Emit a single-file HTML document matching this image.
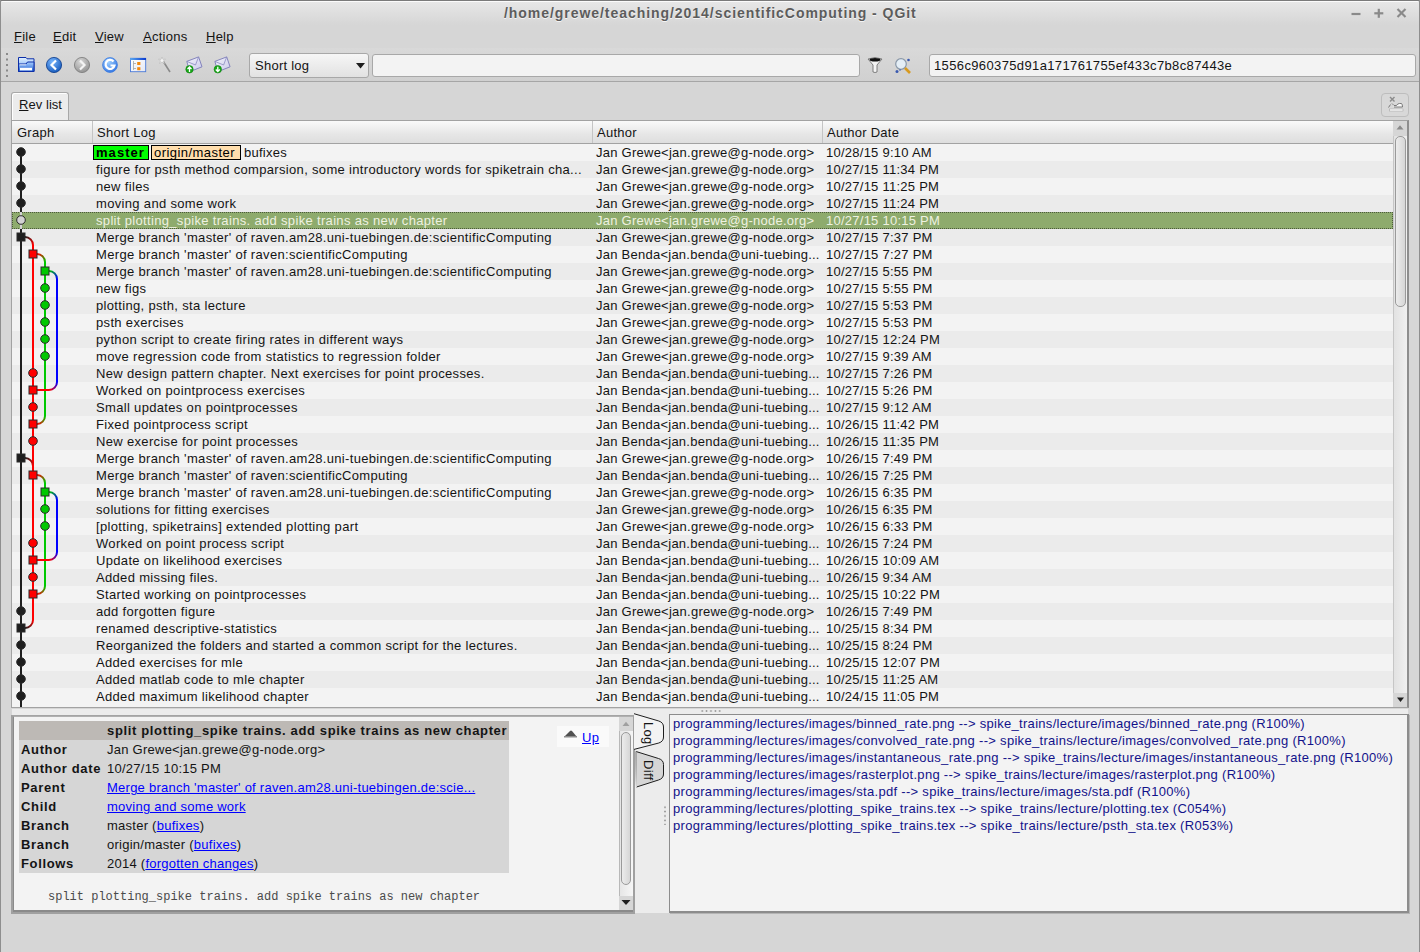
<!DOCTYPE html>
<html><head><meta charset="utf-8">
<style>
*{margin:0;padding:0;box-sizing:border-box}
html,body{width:1420px;height:952px;overflow:hidden;background:#d6d6d6;font-family:"Liberation Sans",sans-serif;font-size:13px;color:#141414}
.abs{position:absolute}
.t{white-space:pre;line-height:17px;font-size:13px;letter-spacing:0.25px;color:#141414}
.rowbg{left:12px;width:1381px;height:17px}
.sel{left:12px;width:1381px;height:17px;background:#8eab6d;border:1px dotted #4c5a3c}
.lbl{height:15px;border:1px solid #000;line-height:13px;padding-left:2px;white-space:pre;letter-spacing:0.25px;color:#000}
u{text-decoration:underline}
.hdr{top:121px;height:23px;background:linear-gradient(#fafafa,#e6e6e6 60%,#dedede);border-bottom:1px solid #a2a2a2}
.hsep{top:121px;width:1px;height:22px;background:#c4c4c4}
.frame{border:1px solid #9a9a9a}
.tb{top:92px}
.k{color:#1e1e1e}
a,.lnk{color:#0000ff;text-decoration:underline}
.ib{line-height:19px;white-space:pre;font-size:13px;letter-spacing:0.25px}
.b{font-weight:bold;letter-spacing:0.65px}
</style></head><body>
<!-- window frame & title -->
<div class="abs" style="left:0;top:0;width:1420px;height:26px;background:linear-gradient(#e8e8e8,#d8d8d8 85%,#d6d6d6);border-radius:5px 5px 0 0"></div>
<div class="abs" style="left:0;top:0;width:1420px;height:1px;background:#7a7a7a"></div>
<div class="abs" style="left:2px;top:1px;width:1416px;height:1px;background:#fbfbfb"></div>
<div class="abs" style="left:0;top:0;width:1px;height:952px;background:#8e8e8e"></div>
<div class="abs" style="left:1419px;top:0;width:1px;height:952px;background:#8e8e8e"></div>
<div class="abs" style="left:504px;top:5px;font-size:14px;font-weight:bold;letter-spacing:0.95px;line-height:17px;color:#5c5c5c;white-space:pre;text-shadow:0 1px 0 #f4f4f4">/home/grewe/teaching/2014/scientificComputing - QGit</div>
<svg class="abs" style="left:1345px;top:5px" width="70" height="18" viewBox="0 0 70 18">
 <g stroke="#8a8a8a" stroke-width="2.2" fill="none">
  <line x1="6.5" y1="9" x2="15.5" y2="9"/>
  <line x1="33.8" y1="3.8" x2="33.8" y2="12.8"/><line x1="29.3" y1="8.3" x2="38.3" y2="8.3"/>
  <line x1="52.5" y1="4" x2="60.5" y2="12"/><line x1="60.5" y1="4" x2="52.5" y2="12"/>
 </g>
</svg>
<!-- menu -->
<div class="abs t" style="left:14px;top:28px"><u>F</u>ile</div>
<div class="abs t" style="left:53px;top:28px"><u>E</u>dit</div>
<div class="abs t" style="left:95px;top:28px"><u>V</u>iew</div>
<div class="abs t" style="left:143px;top:28px"><u>A</u>ctions</div>
<div class="abs t" style="left:206px;top:28px"><u>H</u>elp</div>
<!-- toolbar -->
<div class="abs" style="left:1px;top:48px;width:1418px;height:33px;background:linear-gradient(#d9d9d9,#d0d0d0)"></div>
<div class="abs" style="left:1px;top:81px;width:1418px;height:1px;background:#a6a6a6"></div>
<svg class="abs" style="left:5px;top:52px" width="5" height="27"><g fill="#8a8a8a"><rect x="1" y="1" width="2" height="2"/><rect x="1" y="6.5" width="2" height="2"/><rect x="1" y="12" width="2" height="2"/><rect x="1" y="17.5" width="2" height="2"/><rect x="1" y="23" width="2" height="2"/></g></svg>

<svg class="abs" style="left:16px;top:55px" width="220" height="22" viewBox="0 0 220 22">
 <defs>
  <linearGradient id="fold" x1="0" y1="0" x2="0" y2="1"><stop offset="0" stop-color="#a8d0ff"/><stop offset="1" stop-color="#1c5ad0"/></linearGradient>
  <radialGradient id="blu" cx="0.4" cy="0.3" r="0.8"><stop offset="0" stop-color="#7ab8ff"/><stop offset="1" stop-color="#0b4fb3"/></radialGradient>
  <radialGradient id="gry" cx="0.4" cy="0.3" r="0.8"><stop offset="0" stop-color="#d8d8d8"/><stop offset="1" stop-color="#8a8a8a"/></radialGradient>
  <radialGradient id="blu2" cx="0.4" cy="0.3" r="0.8"><stop offset="0" stop-color="#9fd0ff"/><stop offset="1" stop-color="#2a6ee0"/></radialGradient>
 </defs>
 <!-- folder 18..34 -->
 <linearGradient id="fold2" x1="0" y1="0" x2="0" y2="1"><stop offset="0" stop-color="#e4f2ff"/><stop offset="1" stop-color="#5a9af0"/></linearGradient>
 <path d="M2.5 2.5 H10 L11 3.8 H18 V16.5 H2.5 Z" fill="url(#fold2)" stroke="#0c2ea8" stroke-width="1"/>
 <path d="M2.5 16.5 V9 H10 L11.5 7 H18 V16.5 Z" fill="url(#fold)" stroke="#0c2ea8" stroke-width="1"/>
 <line x1="3.5" y1="9.8" x2="10" y2="9.8" stroke="#ffffff" stroke-width="0.8"/>
 <rect x="4" y="12.8" width="12" height="2.6" fill="#ffffff"/>
 <!-- back 46..62 -->
 <circle cx="38" cy="10" r="7.6" fill="url(#blu)" stroke="#0a3a8a" stroke-width="0.8"/>
 <path d="M40 5.5 L35.5 10 L40 14.5" fill="none" stroke="#fff" stroke-width="2.2"/>
 <!-- forward 74..90 -->
 <circle cx="66" cy="10" r="7.6" fill="url(#gry)" stroke="#7a7a7a" stroke-width="0.8"/>
 <path d="M64 5.5 L68.5 10 L64 14.5" fill="none" stroke="#f4f4f4" stroke-width="2.2"/>
 <!-- refresh 103..118 -->
 <circle cx="94" cy="10" r="7.4" fill="url(#blu2)" stroke="#3a7ae0" stroke-width="0.8"/>
 <path d="M97.5 6.5 A4.5 4.5 0 1 0 98.5 10.5 H94.5" fill="none" stroke="#fff" stroke-width="2.2"/>
 <!-- tree window 130..146 -->
 <linearGradient id="win" x1="0" y1="0" x2="1" y2="1"><stop offset="0" stop-color="#ffffff"/><stop offset="1" stop-color="#e4e8f4"/></linearGradient>
 <linearGradient id="winh" x1="0" y1="0" x2="1" y2="0"><stop offset="0" stop-color="#5aa8f0"/><stop offset="1" stop-color="#0a3ad0"/></linearGradient>
 <rect x="114.5" y="3.3" width="15.2" height="13.4" fill="url(#win)" stroke="#4a7ad8" stroke-width="0.9"/>
 <rect x="114.2" y="3" width="15.8" height="2" fill="url(#winh)"/>
 <rect x="121.2" y="7" width="3.2" height="3" fill="#f48a10"/><rect x="121.2" y="12.2" width="3.2" height="3" fill="#f48a10"/>
 <path d="M117.5 6 V15 M117.5 8.5 H120 M117.5 13.5 H120" stroke="#999" stroke-width="0.7" fill="none"/>
 <!-- wand 162..172 -->
 <line x1="147" y1="6" x2="154" y2="17" stroke="#8a8a8a" stroke-width="1.6"/>
 <path d="M146 2 L147 4.5 L149.5 4 L147.5 6 L148.5 8.5 L146 7 L143.5 8.5 L144.5 6 L142.5 4 L145 4.5 Z" fill="#f4f4f4" stroke="#b0b0b0" stroke-width="0.5"/>
 <!-- mail up 186..201 -->
 <linearGradient id="env" x1="0" y1="0" x2="1" y2="1"><stop offset="0" stop-color="#f4f4fc"/><stop offset="1" stop-color="#c8c8e8"/></linearGradient>
 <path d="M170.8 6.4 L182.6 1.9 L186 11.8 L173.7 16.7 Z" fill="url(#env)" stroke="#7a7ab8" stroke-width="0.9"/>
 <path d="M170.8 6.4 L179.5 10 L182.6 1.9" fill="none" stroke="#8a8ac0" stroke-width="0.8"/>
 <circle cx="173.5" cy="14.3" r="3.7" fill="#18a818" stroke="#0a800a" stroke-width="0.6"/>
 <path d="M173.5 17 V12 M171.5 14 L173.5 12 L175.5 14" stroke="#fff" stroke-width="1.3" fill="none"/>
 <!-- mail down 214..229 -->
 <path d="M198.9 6.4 L210.7 1.9 L214.1 11.8 L201.8 16.7 Z" fill="url(#env)" stroke="#7a7ab8" stroke-width="0.9"/>
 <path d="M198.9 6.4 L207.6 10 L210.7 1.9" fill="none" stroke="#8a8ac0" stroke-width="0.8"/>
 <circle cx="201.8" cy="14.3" r="3.7" fill="#18a818" stroke="#0a800a" stroke-width="0.6"/>
 <path d="M201.8 11.8 V16.5 M199.8 14.5 L201.8 16.5 L203.8 14.5" stroke="#fff" stroke-width="1.3" fill="none"/>
</svg>
<svg class="abs" style="left:866px;top:56px" width="48" height="20" viewBox="0 0 48 20">
 <path d="M2 3 Q9 0 16 3 L11 9 V16 Q9 17 7 16 V9 Z" fill="#f4f4f4" stroke="#666" stroke-width="0.8"/>
 <ellipse cx="9" cy="3.8" rx="5.5" ry="1.8" fill="#111"/>
 <circle cx="35" cy="8" r="5.3" fill="#e4eef6" stroke="#8a98a8" stroke-width="1.2"/>
 <line x1="39" y1="12" x2="44" y2="17" stroke="#d89a20" stroke-width="2.6"/>
 <circle cx="42.5" cy="4" r="1.3" fill="#3a5ab0"/><circle cx="31" cy="15.5" r="1.5" fill="#3a5ab0"/><circle cx="34" cy="14" r="0.8" fill="#3a5ab0"/>
</svg>

<!-- combobox -->
<div class="abs" style="left:249px;top:53px;width:120px;height:25px;border:1px solid #a8a8a8;border-radius:3px;background:linear-gradient(#f6f6f6,#e2e2e2)"></div>
<div class="abs t" style="left:255px;top:57px">Short log</div>
<svg class="abs" style="left:355px;top:63px" width="12" height="6"><path d="M1 0 H10 L5.5 5.5 Z" fill="#1e1e1e"/></svg>
<div class="abs" style="left:372px;top:54px;width:488px;height:23px;border:1px solid #a8a8a8;border-radius:3px;background:#f3f3f3"></div>
<div class="abs" style="left:929px;top:54px;width:487px;height:23px;border:1px solid #a8a8a8;border-radius:3px;background:#f3f3f3"></div>
<div class="abs t" style="left:934px;top:57px;letter-spacing:0.37px">1556c960375d91a171761755ef433c7b8c87443e</div>
<!-- tab bar -->
<div class="abs" style="left:11px;top:92px;width:58px;height:29px;background:#ececec;border:1px solid #a8a8a8;border-bottom:none;border-radius:3px 3px 0 0;box-shadow:inset 1px 1px 0 #fff"></div>
<div class="abs t" style="left:19px;top:96px;letter-spacing:0.05px"><u>R</u>ev list</div>
<div class="abs" style="left:1381px;top:93px;width:28px;height:24px;border:1px solid #bdbdbd;border-radius:4px;background:#d8d8d8"></div>
<svg class="abs" style="left:1383px;top:95px" width="24" height="20" viewBox="0 0 24 20">
 <g stroke="#8c8c8c" stroke-width="1.4" fill="none"><line x1="7" y1="2" x2="11.5" y2="6.5"/><line x1="11.5" y1="2" x2="7" y2="6.5"/></g>
 <path d="M5.5 12.5 L7.5 9.5 M9 8.5 L11 10.5 H13.5 Q14.5 8.5 16.5 8.5 H18.5 Q19.5 9.5 19.5 12 H11" fill="#f8f8f8" stroke="#6e6e6e" stroke-width="0.9"/>
 <rect x="6.5" y="14" width="13.5" height="2" fill="#fafafa" stroke="#a0a0a0" stroke-width="0.5"/>
</svg>
<!-- list frame -->
<div class="abs" style="left:11px;top:120px;width:1398px;height:588px;background:#f3f3f3;border:1px solid #a2a2a2;border-right:2px solid #8e8e8e"></div>
<div class="abs rowbg" style="top:144px;background:#f3f3f3"></div><div class="abs lbl" style="left:93px;top:145px;width:56px;background:#00ff00;font-weight:bold;letter-spacing:1.05px">master</div><div class="abs lbl" style="left:151px;top:145px;width:90px;background:#ffdead;letter-spacing:0.45px">origin/master</div><div class="abs t" style="left:244px;top:144px">bufixes</div><div class="abs t" style="left:596px;top:144px;">Jan Grewe&lt;jan.grewe@g-node.org&gt;</div><div class="abs t" style="left:826px;top:144px;">10/28/15 9:10 AM</div><div class="abs rowbg" style="top:161px;background:#ebebeb"></div><div class="abs t" style="left:96px;top:161px;letter-spacing:0.33px;">figure for psth method comparsion, some introductory words for spiketrain cha...</div><div class="abs t" style="left:596px;top:161px;">Jan Grewe&lt;jan.grewe@g-node.org&gt;</div><div class="abs t" style="left:826px;top:161px;">10/27/15 11:34 PM</div><div class="abs rowbg" style="top:178px;background:#f3f3f3"></div><div class="abs t" style="left:96px;top:178px;letter-spacing:0.33px;">new files</div><div class="abs t" style="left:596px;top:178px;">Jan Grewe&lt;jan.grewe@g-node.org&gt;</div><div class="abs t" style="left:826px;top:178px;">10/27/15 11:25 PM</div><div class="abs rowbg" style="top:195px;background:#ebebeb"></div><div class="abs t" style="left:96px;top:195px;letter-spacing:0.33px;">moving and some work</div><div class="abs t" style="left:596px;top:195px;">Jan Grewe&lt;jan.grewe@g-node.org&gt;</div><div class="abs t" style="left:826px;top:195px;">10/27/15 11:24 PM</div><div class="abs sel" style="top:212px"></div><div class="abs t" style="left:96px;top:212px;letter-spacing:0.33px;color:#eef2e0;">split plotting_spike trains. add spike trains as new chapter</div><div class="abs t" style="left:596px;top:212px;color:#eef2e0;">Jan Grewe&lt;jan.grewe@g-node.org&gt;</div><div class="abs t" style="left:826px;top:212px;color:#eef2e0;">10/27/15 10:15 PM</div><div class="abs rowbg" style="top:229px;background:#ebebeb"></div><div class="abs t" style="left:96px;top:229px;letter-spacing:0.33px;">Merge branch 'master' of raven.am28.uni-tuebingen.de:scientificComputing</div><div class="abs t" style="left:596px;top:229px;">Jan Grewe&lt;jan.grewe@g-node.org&gt;</div><div class="abs t" style="left:826px;top:229px;">10/27/15 7:37 PM</div><div class="abs rowbg" style="top:246px;background:#f3f3f3"></div><div class="abs t" style="left:96px;top:246px;letter-spacing:0.33px;">Merge branch 'master' of raven:scientificComputing</div><div class="abs t" style="left:596px;top:246px;">Jan Benda&lt;jan.benda@uni-tuebing...</div><div class="abs t" style="left:826px;top:246px;">10/27/15 7:27 PM</div><div class="abs rowbg" style="top:263px;background:#ebebeb"></div><div class="abs t" style="left:96px;top:263px;letter-spacing:0.33px;">Merge branch 'master' of raven.am28.uni-tuebingen.de:scientificComputing</div><div class="abs t" style="left:596px;top:263px;">Jan Grewe&lt;jan.grewe@g-node.org&gt;</div><div class="abs t" style="left:826px;top:263px;">10/27/15 5:55 PM</div><div class="abs rowbg" style="top:280px;background:#f3f3f3"></div><div class="abs t" style="left:96px;top:280px;letter-spacing:0.33px;">new figs</div><div class="abs t" style="left:596px;top:280px;">Jan Grewe&lt;jan.grewe@g-node.org&gt;</div><div class="abs t" style="left:826px;top:280px;">10/27/15 5:55 PM</div><div class="abs rowbg" style="top:297px;background:#ebebeb"></div><div class="abs t" style="left:96px;top:297px;letter-spacing:0.33px;">plotting, psth, sta lecture</div><div class="abs t" style="left:596px;top:297px;">Jan Grewe&lt;jan.grewe@g-node.org&gt;</div><div class="abs t" style="left:826px;top:297px;">10/27/15 5:53 PM</div><div class="abs rowbg" style="top:314px;background:#f3f3f3"></div><div class="abs t" style="left:96px;top:314px;letter-spacing:0.33px;">psth exercises</div><div class="abs t" style="left:596px;top:314px;">Jan Grewe&lt;jan.grewe@g-node.org&gt;</div><div class="abs t" style="left:826px;top:314px;">10/27/15 5:53 PM</div><div class="abs rowbg" style="top:331px;background:#ebebeb"></div><div class="abs t" style="left:96px;top:331px;letter-spacing:0.33px;">python script to create firing rates in different ways</div><div class="abs t" style="left:596px;top:331px;">Jan Grewe&lt;jan.grewe@g-node.org&gt;</div><div class="abs t" style="left:826px;top:331px;">10/27/15 12:24 PM</div><div class="abs rowbg" style="top:348px;background:#f3f3f3"></div><div class="abs t" style="left:96px;top:348px;letter-spacing:0.33px;">move regression code from statistics to regression folder</div><div class="abs t" style="left:596px;top:348px;">Jan Grewe&lt;jan.grewe@g-node.org&gt;</div><div class="abs t" style="left:826px;top:348px;">10/27/15 9:39 AM</div><div class="abs rowbg" style="top:365px;background:#ebebeb"></div><div class="abs t" style="left:96px;top:365px;letter-spacing:0.33px;">New design pattern chapter. Next exercises for point processes.</div><div class="abs t" style="left:596px;top:365px;">Jan Benda&lt;jan.benda@uni-tuebing...</div><div class="abs t" style="left:826px;top:365px;">10/27/15 7:26 PM</div><div class="abs rowbg" style="top:382px;background:#f3f3f3"></div><div class="abs t" style="left:96px;top:382px;letter-spacing:0.33px;">Worked on pointprocess exercises</div><div class="abs t" style="left:596px;top:382px;">Jan Benda&lt;jan.benda@uni-tuebing...</div><div class="abs t" style="left:826px;top:382px;">10/27/15 5:26 PM</div><div class="abs rowbg" style="top:399px;background:#ebebeb"></div><div class="abs t" style="left:96px;top:399px;letter-spacing:0.33px;">Small updates on pointprocesses</div><div class="abs t" style="left:596px;top:399px;">Jan Benda&lt;jan.benda@uni-tuebing...</div><div class="abs t" style="left:826px;top:399px;">10/27/15 9:12 AM</div><div class="abs rowbg" style="top:416px;background:#f3f3f3"></div><div class="abs t" style="left:96px;top:416px;letter-spacing:0.33px;">Fixed pointprocess script</div><div class="abs t" style="left:596px;top:416px;">Jan Benda&lt;jan.benda@uni-tuebing...</div><div class="abs t" style="left:826px;top:416px;">10/26/15 11:42 PM</div><div class="abs rowbg" style="top:433px;background:#ebebeb"></div><div class="abs t" style="left:96px;top:433px;letter-spacing:0.33px;">New exercise for point processes</div><div class="abs t" style="left:596px;top:433px;">Jan Benda&lt;jan.benda@uni-tuebing...</div><div class="abs t" style="left:826px;top:433px;">10/26/15 11:35 PM</div><div class="abs rowbg" style="top:450px;background:#f3f3f3"></div><div class="abs t" style="left:96px;top:450px;letter-spacing:0.33px;">Merge branch 'master' of raven.am28.uni-tuebingen.de:scientificComputing</div><div class="abs t" style="left:596px;top:450px;">Jan Grewe&lt;jan.grewe@g-node.org&gt;</div><div class="abs t" style="left:826px;top:450px;">10/26/15 7:49 PM</div><div class="abs rowbg" style="top:467px;background:#ebebeb"></div><div class="abs t" style="left:96px;top:467px;letter-spacing:0.33px;">Merge branch 'master' of raven:scientificComputing</div><div class="abs t" style="left:596px;top:467px;">Jan Benda&lt;jan.benda@uni-tuebing...</div><div class="abs t" style="left:826px;top:467px;">10/26/15 7:25 PM</div><div class="abs rowbg" style="top:484px;background:#f3f3f3"></div><div class="abs t" style="left:96px;top:484px;letter-spacing:0.33px;">Merge branch 'master' of raven.am28.uni-tuebingen.de:scientificComputing</div><div class="abs t" style="left:596px;top:484px;">Jan Grewe&lt;jan.grewe@g-node.org&gt;</div><div class="abs t" style="left:826px;top:484px;">10/26/15 6:35 PM</div><div class="abs rowbg" style="top:501px;background:#ebebeb"></div><div class="abs t" style="left:96px;top:501px;letter-spacing:0.33px;">solutions for fitting exercises</div><div class="abs t" style="left:596px;top:501px;">Jan Grewe&lt;jan.grewe@g-node.org&gt;</div><div class="abs t" style="left:826px;top:501px;">10/26/15 6:35 PM</div><div class="abs rowbg" style="top:518px;background:#f3f3f3"></div><div class="abs t" style="left:96px;top:518px;letter-spacing:0.33px;">[plotting, spiketrains] extended plotting part</div><div class="abs t" style="left:596px;top:518px;">Jan Grewe&lt;jan.grewe@g-node.org&gt;</div><div class="abs t" style="left:826px;top:518px;">10/26/15 6:33 PM</div><div class="abs rowbg" style="top:535px;background:#ebebeb"></div><div class="abs t" style="left:96px;top:535px;letter-spacing:0.33px;">Worked on point process script</div><div class="abs t" style="left:596px;top:535px;">Jan Benda&lt;jan.benda@uni-tuebing...</div><div class="abs t" style="left:826px;top:535px;">10/26/15 7:24 PM</div><div class="abs rowbg" style="top:552px;background:#f3f3f3"></div><div class="abs t" style="left:96px;top:552px;letter-spacing:0.33px;">Update on likelihood exercises</div><div class="abs t" style="left:596px;top:552px;">Jan Benda&lt;jan.benda@uni-tuebing...</div><div class="abs t" style="left:826px;top:552px;">10/26/15 10:09 AM</div><div class="abs rowbg" style="top:569px;background:#ebebeb"></div><div class="abs t" style="left:96px;top:569px;letter-spacing:0.33px;">Added missing files.</div><div class="abs t" style="left:596px;top:569px;">Jan Benda&lt;jan.benda@uni-tuebing...</div><div class="abs t" style="left:826px;top:569px;">10/26/15 9:34 AM</div><div class="abs rowbg" style="top:586px;background:#f3f3f3"></div><div class="abs t" style="left:96px;top:586px;letter-spacing:0.33px;">Started working on pointprocesses</div><div class="abs t" style="left:596px;top:586px;">Jan Benda&lt;jan.benda@uni-tuebing...</div><div class="abs t" style="left:826px;top:586px;">10/25/15 10:22 PM</div><div class="abs rowbg" style="top:603px;background:#ebebeb"></div><div class="abs t" style="left:96px;top:603px;letter-spacing:0.33px;">add forgotten figure</div><div class="abs t" style="left:596px;top:603px;">Jan Grewe&lt;jan.grewe@g-node.org&gt;</div><div class="abs t" style="left:826px;top:603px;">10/26/15 7:49 PM</div><div class="abs rowbg" style="top:620px;background:#f3f3f3"></div><div class="abs t" style="left:96px;top:620px;letter-spacing:0.33px;">renamed descriptive-statistics</div><div class="abs t" style="left:596px;top:620px;">Jan Benda&lt;jan.benda@uni-tuebing...</div><div class="abs t" style="left:826px;top:620px;">10/25/15 8:34 PM</div><div class="abs rowbg" style="top:637px;background:#ebebeb"></div><div class="abs t" style="left:96px;top:637px;letter-spacing:0.33px;">Reorganized the folders and started a common script for the lectures.</div><div class="abs t" style="left:596px;top:637px;">Jan Benda&lt;jan.benda@uni-tuebing...</div><div class="abs t" style="left:826px;top:637px;">10/25/15 8:24 PM</div><div class="abs rowbg" style="top:654px;background:#f3f3f3"></div><div class="abs t" style="left:96px;top:654px;letter-spacing:0.33px;">Added exercises for mle</div><div class="abs t" style="left:596px;top:654px;">Jan Benda&lt;jan.benda@uni-tuebing...</div><div class="abs t" style="left:826px;top:654px;">10/25/15 12:07 PM</div><div class="abs rowbg" style="top:671px;background:#ebebeb"></div><div class="abs t" style="left:96px;top:671px;letter-spacing:0.33px;">Added matlab code to mle chapter</div><div class="abs t" style="left:596px;top:671px;">Jan Benda&lt;jan.benda@uni-tuebing...</div><div class="abs t" style="left:826px;top:671px;">10/25/15 11:25 AM</div><div class="abs rowbg" style="top:688px;background:#f3f3f3"></div><div class="abs t" style="left:96px;top:688px;letter-spacing:0.33px;">Added maximum likelihood chapter</div><div class="abs t" style="left:596px;top:688px;">Jan Benda&lt;jan.benda@uni-tuebing...</div><div class="abs t" style="left:826px;top:688px;">10/24/15 11:05 PM</div>
<div class="abs hdr" style="left:12px;width:1381px"></div>
<div class="abs hsep" style="left:92px"></div>
<div class="abs hsep" style="left:592px"></div>
<div class="abs hsep" style="left:822px"></div>
<div class="abs t" style="left:17px;top:124px">Graph</div>
<div class="abs t" style="left:97px;top:124px">Short Log</div>
<div class="abs t" style="left:597px;top:124px">Author</div>
<div class="abs t" style="left:827px;top:124px">Author Date</div>
<svg class="abs" style="left:0;top:0" width="100" height="710" viewBox="0 0 100 710"><defs><linearGradient id="g1" gradientUnits="userSpaceOnUse" x1="25" y1="237" x2="33" y2="245"><stop offset="0" stop-color="#1e1e1e"/><stop offset="1" stop-color="#ff0000"/></linearGradient><linearGradient id="g2" gradientUnits="userSpaceOnUse" x1="37" y1="254" x2="45" y2="262"><stop offset="0" stop-color="#ff0000"/><stop offset="1" stop-color="#00c800"/></linearGradient><linearGradient id="g3" gradientUnits="userSpaceOnUse" x1="49" y1="271" x2="57" y2="279"><stop offset="0" stop-color="#00c800"/><stop offset="1" stop-color="#0000ff"/></linearGradient><linearGradient id="g4" gradientUnits="userSpaceOnUse" x1="25" y1="458" x2="33" y2="466"><stop offset="0" stop-color="#1e1e1e"/><stop offset="1" stop-color="#ff0000"/></linearGradient><linearGradient id="g5" gradientUnits="userSpaceOnUse" x1="37" y1="475" x2="45" y2="483"><stop offset="0" stop-color="#ff0000"/><stop offset="1" stop-color="#00c800"/></linearGradient><linearGradient id="g6" gradientUnits="userSpaceOnUse" x1="49" y1="492" x2="57" y2="500"><stop offset="0" stop-color="#00c800"/><stop offset="1" stop-color="#0000ff"/></linearGradient><linearGradient id="g7" gradientUnits="userSpaceOnUse" x1="57" y1="382" x2="49" y2="390"><stop offset="0" stop-color="#0000ff"/><stop offset="1" stop-color="#ff0000"/></linearGradient><linearGradient id="g8" gradientUnits="userSpaceOnUse" x1="45" y1="416" x2="37" y2="424"><stop offset="0" stop-color="#00c800"/><stop offset="1" stop-color="#ff0000"/></linearGradient><linearGradient id="g9" gradientUnits="userSpaceOnUse" x1="57" y1="552" x2="49" y2="560"><stop offset="0" stop-color="#0000ff"/><stop offset="1" stop-color="#ff0000"/></linearGradient><linearGradient id="g10" gradientUnits="userSpaceOnUse" x1="45" y1="586" x2="37" y2="594"><stop offset="0" stop-color="#00c800"/><stop offset="1" stop-color="#ff0000"/></linearGradient><linearGradient id="g11" gradientUnits="userSpaceOnUse" x1="33" y1="620" x2="25" y2="628"><stop offset="0" stop-color="#ff0000"/><stop offset="1" stop-color="#1e1e1e"/></linearGradient></defs><line x1="21" y1="152" x2="21" y2="707" stroke="#1e1e1e" stroke-width="2"/><line x1="33" y1="245" x2="33" y2="620" stroke="#ff0000" stroke-width="2"/><line x1="45" y1="262" x2="45" y2="416" stroke="#00c800" stroke-width="2"/><line x1="45" y1="483" x2="45" y2="586" stroke="#00c800" stroke-width="2"/><line x1="57" y1="279" x2="57" y2="382" stroke="#0000ff" stroke-width="2"/><line x1="57" y1="500" x2="57" y2="552" stroke="#0000ff" stroke-width="2"/><line x1="21" y1="212" x2="21" y2="229" stroke="#d2d2d2" stroke-width="2"/><path d="M25 237 H25 A8 8 0 0 1 33 245" fill="none" stroke="url(#g1)" stroke-width="2"/><path d="M37 254 H37 A8 8 0 0 1 45 262" fill="none" stroke="url(#g2)" stroke-width="2"/><path d="M49 271 H49 A8 8 0 0 1 57 279" fill="none" stroke="url(#g3)" stroke-width="2"/><path d="M25 458 H25 A8 8 0 0 1 33 466" fill="none" stroke="url(#g4)" stroke-width="2"/><path d="M37 475 H37 A8 8 0 0 1 45 483" fill="none" stroke="url(#g5)" stroke-width="2"/><path d="M49 492 H49 A8 8 0 0 1 57 500" fill="none" stroke="url(#g6)" stroke-width="2"/><path d="M57 382 A8 8 0 0 1 49 390 H37" fill="none" stroke="url(#g7)" stroke-width="2"/><path d="M45 416 A8 8 0 0 1 37 424 H37" fill="none" stroke="url(#g8)" stroke-width="2"/><path d="M57 552 A8 8 0 0 1 49 560 H37" fill="none" stroke="url(#g9)" stroke-width="2"/><path d="M45 586 A8 8 0 0 1 37 594 H37" fill="none" stroke="url(#g10)" stroke-width="2"/><path d="M33 620 A8 8 0 0 1 25 628 H25" fill="none" stroke="url(#g11)" stroke-width="2"/><circle cx="21" cy="152" r="4.3" fill="#1e1e1e" stroke="#2a2a2a" stroke-width="1"/><circle cx="21" cy="169" r="4.3" fill="#1e1e1e" stroke="#2a2a2a" stroke-width="1"/><circle cx="21" cy="186" r="4.3" fill="#1e1e1e" stroke="#2a2a2a" stroke-width="1"/><circle cx="21" cy="203" r="4.3" fill="#1e1e1e" stroke="#2a2a2a" stroke-width="1"/><circle cx="21" cy="220" r="4.3" fill="#d2d2d2" stroke="#2a2a2a" stroke-width="1"/><rect x="17" y="233" width="8" height="8" fill="#1e1e1e" stroke="#2a2a2a" stroke-width="1"/><rect x="29" y="250" width="8" height="8" fill="#ff0000" stroke="#2a2a2a" stroke-width="1"/><rect x="41" y="267" width="8" height="8" fill="#00c800" stroke="#2a2a2a" stroke-width="1"/><circle cx="45" cy="288" r="4.3" fill="#00c800" stroke="#2a2a2a" stroke-width="1"/><circle cx="45" cy="305" r="4.3" fill="#00c800" stroke="#2a2a2a" stroke-width="1"/><circle cx="45" cy="322" r="4.3" fill="#00c800" stroke="#2a2a2a" stroke-width="1"/><circle cx="45" cy="339" r="4.3" fill="#00c800" stroke="#2a2a2a" stroke-width="1"/><circle cx="45" cy="356" r="4.3" fill="#00c800" stroke="#2a2a2a" stroke-width="1"/><circle cx="33" cy="373" r="4.3" fill="#ff0000" stroke="#2a2a2a" stroke-width="1"/><rect x="29" y="386" width="8" height="8" fill="#ff0000" stroke="#2a2a2a" stroke-width="1"/><circle cx="33" cy="407" r="4.3" fill="#ff0000" stroke="#2a2a2a" stroke-width="1"/><rect x="29" y="420" width="8" height="8" fill="#ff0000" stroke="#2a2a2a" stroke-width="1"/><circle cx="33" cy="441" r="4.3" fill="#ff0000" stroke="#2a2a2a" stroke-width="1"/><rect x="17" y="454" width="8" height="8" fill="#1e1e1e" stroke="#2a2a2a" stroke-width="1"/><rect x="29" y="471" width="8" height="8" fill="#ff0000" stroke="#2a2a2a" stroke-width="1"/><rect x="41" y="488" width="8" height="8" fill="#00c800" stroke="#2a2a2a" stroke-width="1"/><circle cx="45" cy="509" r="4.3" fill="#00c800" stroke="#2a2a2a" stroke-width="1"/><circle cx="45" cy="526" r="4.3" fill="#00c800" stroke="#2a2a2a" stroke-width="1"/><circle cx="33" cy="543" r="4.3" fill="#ff0000" stroke="#2a2a2a" stroke-width="1"/><rect x="29" y="556" width="8" height="8" fill="#ff0000" stroke="#2a2a2a" stroke-width="1"/><circle cx="33" cy="577" r="4.3" fill="#ff0000" stroke="#2a2a2a" stroke-width="1"/><rect x="29" y="590" width="8" height="8" fill="#ff0000" stroke="#2a2a2a" stroke-width="1"/><circle cx="21" cy="611" r="4.3" fill="#1e1e1e" stroke="#2a2a2a" stroke-width="1"/><rect x="17" y="624" width="8" height="8" fill="#1e1e1e" stroke="#2a2a2a" stroke-width="1"/><circle cx="21" cy="645" r="4.3" fill="#1e1e1e" stroke="#2a2a2a" stroke-width="1"/><circle cx="21" cy="662" r="4.3" fill="#1e1e1e" stroke="#2a2a2a" stroke-width="1"/><circle cx="21" cy="679" r="4.3" fill="#1e1e1e" stroke="#2a2a2a" stroke-width="1"/><circle cx="21" cy="696" r="4.3" fill="#1e1e1e" stroke="#2a2a2a" stroke-width="1"/></svg>
<!-- list scrollbar -->
<div class="abs" style="left:1393px;top:121px;width:14px;height:586px;background:linear-gradient(90deg,#e2e2e2,#f0f0f0);border-left:1px solid #c6c6c6"></div>
<div class="abs" style="left:1393px;top:121px;width:14px;height:15px;background:#d6d6d6"></div>
<svg class="abs" style="left:1395px;top:124px" width="10" height="8"><path d="M1.5 5.5 L5 1.2 L8.5 5.5 Z" fill="#8a8a8a"/></svg>
<div class="abs" style="left:1395px;top:136px;width:11px;height:171px;border:1px solid #9a9a9a;border-radius:5px;background:linear-gradient(90deg,#ececec,#d6d6d6)"></div>
<div class="abs" style="left:1393px;top:693px;width:14px;height:14px;background:#d6d6d6"></div>
<svg class="abs" style="left:1396px;top:696px" width="10" height="8"><path d="M1 1.5 L4.5 6 L8 1.5 Z" fill="#1e1e1e"/></svg>
<!-- splitter -->
<div class="abs" style="left:12px;top:709px;width:1396px;height:6px;background:#ececec"></div>
<div class="abs" style="left:700px;top:710px;width:22px;height:2px;background:radial-gradient(circle,#9a9a9a 0.8px,transparent 1.1px) 0 0/4.4px 2px"></div>
<!-- bottom left: revision info -->
<div class="abs" style="left:11px;top:715px;width:624px;height:199px;border:2px solid #a0a0a0;border-top-width:1px;border-top-color:#a4a4a4;background:#f3f3f3"></div>
<div class="abs" style="left:13px;top:716px;width:620px;height:196px;border:1px solid #8a8a8a;border-top-color:#b0b0b0;border-right:none;border-bottom-width:2px"></div>
<div class="abs" style="left:19px;top:721px;width:490px;height:19px;background:#bdb9b5"></div>
<div class="abs" style="left:19px;top:740px;width:490px;height:133px;background:#d6d6d6"></div>
<div class="abs ib b" style="left:107px;top:721px">split plotting_spike trains. add spike trains as new chapter</div>
<div class="abs ib b" style="left:21px;top:740px">Author</div>
<div class="abs ib b" style="left:21px;top:759px">Author date</div>
<div class="abs ib b" style="left:21px;top:778px">Parent</div>
<div class="abs ib b" style="left:21px;top:797px">Child</div>
<div class="abs ib b" style="left:21px;top:816px">Branch</div>
<div class="abs ib b" style="left:21px;top:835px">Branch</div>
<div class="abs ib b" style="left:21px;top:854px">Follows</div>
<div class="abs ib" style="left:107px;top:740px">Jan Grewe&lt;jan.grewe@g-node.org&gt;</div>
<div class="abs ib" style="left:107px;top:759px">10/27/15 10:15 PM</div>
<div class="abs ib lnk" style="left:107px;top:778px">Merge branch 'master' of raven.am28.uni-tuebingen.de:scie...</div>
<div class="abs ib lnk" style="left:107px;top:797px">moving and some work</div>
<div class="abs ib" style="left:107px;top:816px">master (<span class="lnk">bufixes</span>)</div>
<div class="abs ib" style="left:107px;top:835px">origin/master (<span class="lnk">bufixes</span>)</div>
<div class="abs ib" style="left:107px;top:854px">2014 (<span class="lnk">forgotten changes</span>)</div>
<div class="abs" style="left:557px;top:726px;width:52px;height:21px;background:#fafafa"></div>
<svg class="abs" style="left:563px;top:729px" width="16" height="10"><path d="M1 8 L7 2 Q8 1 9 2 L14 8 Z" fill="#505050"/><rect x="1" y="7" width="13" height="1.5" fill="#8a8a8a"/></svg>
<div class="abs ib lnk" style="left:582px;top:728px">Up</div>
<div class="abs" style="left:48px;top:889px;font-family:'Liberation Mono',monospace;font-size:12px;line-height:17px;white-space:pre;color:#4a4a4a">split plotting_spike trains. add spike trains as new chapter</div>
<!-- info scrollbar -->
<div class="abs" style="left:619px;top:717px;width:14px;height:193px;background:linear-gradient(90deg,#e6e6e6,#f6f6f6);border-left:1px solid #b8b8b8"></div>
<div class="abs" style="left:619px;top:717px;width:14px;height:14px;background:#d6d6d6"></div>
<svg class="abs" style="left:621px;top:720px" width="10" height="8"><path d="M1.5 6 L5 1.8 L8.5 6 Z" fill="#a0a0a0"/></svg>
<div class="abs" style="left:621px;top:732px;width:10px;height:153px;border:1px solid #9a9a9a;border-radius:5px;background:linear-gradient(90deg,#ececec,#d6d6d6)"></div>
<div class="abs" style="left:619px;top:896px;width:14px;height:14px;background:#d6d6d6"></div>
<svg class="abs" style="left:621px;top:899px" width="10" height="8"><path d="M0.5 1 L5 6 L9.5 1 Z" fill="#1e1e1e"/></svg>
<!-- vertical tabs -->
<div class="abs" style="left:635px;top:715px;width:34px;height:198px;background:#ececec"></div>
<svg class="abs" style="left:634px;top:712px" width="36" height="80" viewBox="0 0 36 80">
 <path d="M0 1.7 L24.8 9 Q29.5 10.5 29.5 15 V25 Q29.5 29.5 24.8 31 L0 37.4" fill="#f3f3f3" stroke="#1e1e1e" stroke-width="1"/>
 <path d="M2 39.5 L24.5 46.5 Q29.5 48 29.5 52.5 V62 Q29.5 66.5 24.5 68 L2.5 75 Z" fill="#d6d6d6" stroke="#1e1e1e" stroke-width="1"/>
 <line x1="2" y1="39.5" x2="2.5" y2="75" stroke="#d6d6d6" stroke-width="1"/>
</svg>
<div class="abs t" style="left:653px;top:722px;transform-origin:0 0;transform:rotate(90deg) translate(0,-4px);letter-spacing:0.3px">Log</div>
<div class="abs t" style="left:653px;top:760px;transform-origin:0 0;transform:rotate(90deg) translate(0,-4px);letter-spacing:0.3px">Diff</div>
<div class="abs" style="left:664px;top:805px;width:2px;height:20px;background:radial-gradient(circle,#9a9a9a 0.8px,transparent 1.1px) 0 0/2px 4.4px"></div>
<!-- file list -->
<div class="abs" style="left:669px;top:714px;width:740px;height:199px;background:#f3f3f3;border:2px solid #8c8c8c;border-top-width:1px;border-left-width:1px;box-shadow:1px 1px 0 #b4b4b4"></div>
<div class="abs t" style="left:673px;top:715px;color:#12128a;letter-spacing:0.3px">programming/lectures/images/binned_rate.png --&gt; spike_trains/lecture/images/binned_rate.png (R100%)</div><div class="abs t" style="left:673px;top:732px;color:#12128a;letter-spacing:0.3px">programming/lectures/images/convolved_rate.png --&gt; spike_trains/lecture/images/convolved_rate.png (R100%)</div><div class="abs t" style="left:673px;top:749px;color:#12128a;letter-spacing:0.3px">programming/lectures/images/instantaneous_rate.png --&gt; spike_trains/lecture/images/instantaneous_rate.png (R100%)</div><div class="abs t" style="left:673px;top:766px;color:#12128a;letter-spacing:0.3px">programming/lectures/images/rasterplot.png --&gt; spike_trains/lecture/images/rasterplot.png (R100%)</div><div class="abs t" style="left:673px;top:783px;color:#12128a;letter-spacing:0.3px">programming/lectures/images/sta.pdf --&gt; spike_trains/lecture/images/sta.pdf (R100%)</div><div class="abs t" style="left:673px;top:800px;color:#12128a;letter-spacing:0.3px">programming/lectures/plotting_spike_trains.tex --&gt; spike_trains/lecture/plotting.tex (C054%)</div><div class="abs t" style="left:673px;top:817px;color:#12128a;letter-spacing:0.3px">programming/lectures/plotting_spike_trains.tex --&gt; spike_trains/lecture/psth_sta.tex (R053%)</div>
</body></html>
